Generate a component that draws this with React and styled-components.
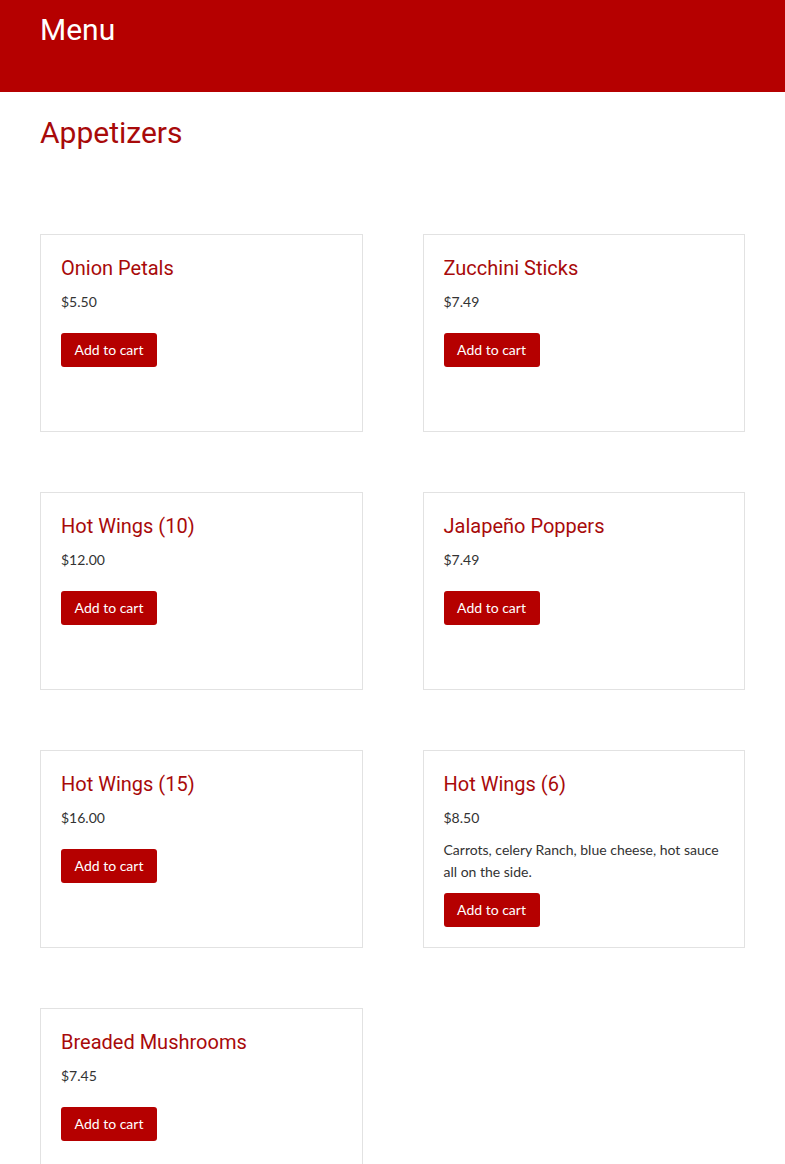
import * as React from 'react'
import styled, { createGlobalStyle } from 'styled-components'

const items = [
    { name: 'Onion Petals', price: '$5.50' },
    { name: 'Zucchini Sticks', price: '$7.49' },
    { name: 'Hot Wings (10)', price: '$12.00' },
    { name: 'Jalapeño Poppers', price: '$7.49' },
    { name: 'Hot Wings (15)', price: '$16.00' },
    { name: 'Hot Wings (6)', price: '$8.50', description: 'Carrots, celery Ranch, blue cheese, hot sauce all on the side.' },
    { name: 'Breaded Mushrooms', price: '$7.45' },
]

const App = () => {
    return (
        <>
            <GlobalStyle />
            <Header>
                <HeaderTitle>Menu</HeaderTitle>
            </Header>
            <Main>
                <SectionHeading>Appetizers</SectionHeading>
                <Grid>
                    {items.map(item => (
                        <Card key={item.name}>
                            <ItemName>{item.name}</ItemName>
                            <Price>{item.price}</Price>
                            {item.description && <Description>{item.description}</Description>}
                            <CartButton>Add to cart</CartButton>
                        </Card>
                    ))}
                </Grid>
            </Main>
        </>
    )
}

export default App

const GlobalStyle = createGlobalStyle`
    * {
        box-sizing: border-box;
    }

    body {
        margin: 0;
        background: #fff;
        font-family: Lato, "Open Sans", sans-serif;
        color: #333;
    }
`

const Header = styled.header`
    height: 92px;
    padding: 12px 40px 0;
    background: #b50000;
`

const HeaderTitle = styled.h1`
    margin: 0;
    font-family: Roboto, sans-serif;
    font-size: 30px;
    font-weight: 400;
    line-height: 35px;
    color: #fff;
`

const Main = styled.main`
    padding: 22px 40px 40px;
`

const SectionHeading = styled.h2`
    margin: 0;
    font-family: Roboto, sans-serif;
    font-size: 30px;
    font-weight: 400;
    line-height: 37px;
    color: #a80a0a;
`

const Grid = styled.div`
    display: grid;
    grid-template-columns: 1fr 1fr;
    gap: 60px;
    margin-top: 83px;
`

const Card = styled.div`
    display: flex;
    flex-direction: column;
    align-items: flex-start;
    min-height: 198px;
    padding: 21px 20px 20px;
    border: 1px solid #e2e2e2;
`

const ItemName = styled.h3`
    margin: 0 0 10px;
    font-family: Roboto, sans-serif;
    font-size: 20px;
    font-weight: 400;
    line-height: 25px;
    color: #a80a0a;
`

const Price = styled.p`
    margin: 0 0 10px;
    font-size: 14px;
    line-height: 22px;
    color: #333;
`

const Description = styled.p`
    margin: 0;
    font-size: 14px;
    line-height: 22px;
    color: #333;
`

const CartButton = styled.button`
    margin-top: 10px;
    padding: 0 13px 1px;
    width: 96px;
    height: 34px;
    border: none;
    border-radius: 3px;
    background: #b50000;
    font-family: Lato, sans-serif;
    font-size: 14px;
    color: #fff;
    cursor: pointer;
`
